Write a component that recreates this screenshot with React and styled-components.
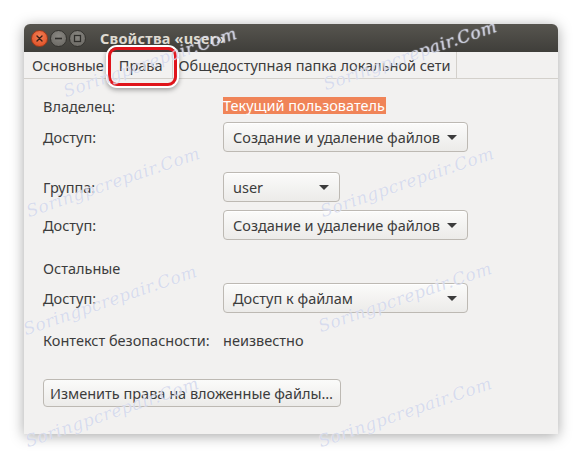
import React from "react"
import styled, { createGlobalStyle } from "styled-components"

const GlobalStyle = createGlobalStyle`
  html, body {
    margin: 0;
    padding: 0;
    background: #ffffff;
  }
  body {
    font-family: "Noto Sans", "Open Sans", sans-serif;
    font-size: 14.5px;
    color: #3c3c3c;
  }
`

const Page = styled.div`
  position: relative;
  width: 582px;
  height: 458px;
  padding: 24px 0 0 24px;
  box-sizing: border-box;
  overflow: hidden;
`

const Window = styled.div`
  width: 534px;
  height: 410px;
  background: #f2f1f0;
  border-radius: 6px 6px 0 0;
  box-shadow: 0 2px 14px rgba(0, 0, 0, 0.35);
  display: flex;
  flex-direction: column;
`

const TitleBar = styled.div`
  height: 28px;
  border-radius: 6px 6px 0 0;
  background: linear-gradient(#57554f, #3f3e3a);
  display: flex;
  align-items: center;
  padding-left: 7px;
  gap: 2px;
`

const WinButton = styled.span`
  width: 17px;
  height: 17px;
  box-sizing: border-box;
  border-radius: 50%;
  background: ${p => (p.$close
    ? "radial-gradient(circle at 50% 35%, #f57f55, #dc4a20)"
    : "radial-gradient(circle at 50% 35%, #8a8883, #66645f)")};
  border: 1px solid ${p => (p.$close ? "#9e3a1c" : "#34332f")};
  display: flex;
  align-items: center;
  justify-content: center;
`

const Title = styled.div`
  margin-left: 12px;
  color: #dfdbd2;
  font-weight: bold;
  font-size: 14.5px;
  letter-spacing: 0.2px;
`

const TabBar = styled.div`
  height: 26px;
  display: flex;
  align-items: stretch;
  padding-left: 2px;
  border-bottom: 1px solid #d3d0cb;
`

const Tab = styled.div`
  display: flex;
  align-items: center;
  padding: 0 6px;
  color: #3c3c3c;
  border-right: ${p => (p.$sep ? "1px solid #d3d0cb" : "none")};
`

const TabText = styled.span`
  position: relative;
  padding: 0 ${p => (p.$pad ? 3 : 0)}px;
`

const Highlight = styled.div`
  position: absolute;
  left: -8px;
  top: -8px;
  width: 63px;
  height: 33px;
  border: 3px solid #e0141b;
  border-radius: 9px;
  box-shadow: 0 0 0 2px #ffffff, 0 2px 5px 2px rgba(0, 0, 0, 0.35);
  pointer-events: none;
`

const Content = styled.div`
  padding: 18px 0 0 19px;
  display: flex;
  flex-direction: column;
`

const Row = styled.div`
  display: flex;
  align-items: center;
  height: ${p => p.$h || 17}px;
  margin-top: ${p => p.$mt || 0}px;
`

const Label = styled.div`
  width: 180px;
  flex-shrink: 0;
`

const OwnerValue = styled.span`
  background: #f08458;
  color: #ffffff;
  padding: 0 1px 0 0;
  line-height: 17px;
`

const Combo = styled.div`
  width: ${p => p.$w}px;
  height: 30px;
  box-sizing: border-box;
  border: 1px solid #bdb9b3;
  border-radius: 4px;
  background: linear-gradient(#fbfbfa, #ecebe9);
  box-shadow: inset 0 1px 0 #ffffff;
  display: flex;
  align-items: center;
  justify-content: space-between;
  padding: 0 10px 0 9px;
  color: #3c3c3c;
`

const Arrow = styled.span`
  width: 0;
  height: 0;
  border-left: 5px solid transparent;
  border-right: 5px solid transparent;
  border-top: 5px solid #3c3c3c;
`

const Button = styled.div`
  width: 298px;
  height: 28px;
  box-sizing: border-box;
  border: 1px solid #bdb9b3;
  border-radius: 4px;
  background: linear-gradient(#fbfbfa, #ecebe9);
  display: flex;
  align-items: center;
  padding-left: 6px;
  color: #3c3c3c;
`

const Watermark = styled.span`
  position: absolute;
  left: ${p => p.$x}px;
  top: ${p => p.$y}px;
  transform: translate(-50%, -50%) rotate(-19deg);
  font-family: "DejaVu Serif", serif;
  font-style: italic;
  font-size: 17px;
  letter-spacing: 0.5px;
  color: rgba(178, 186, 220, 0.5);
  text-shadow: 0 0 1px #ffffff;
  white-space: nowrap;
  pointer-events: none;
`

const marks = [
  [150, 62], [410, 55],
  [113, 182], [407, 182],
  [110, 300], [405, 297],
  [112, 412], [405, 412],
]

const CloseIcon = () => (
  <svg width="7" height="7" viewBox="0 0 7 7">
    <path d="M1 1L6 6M6 1L1 6" stroke="#3b2119" strokeWidth="1.4" strokeLinecap="round" />
  </svg>
)

const MinIcon = () => (
  <svg width="9" height="9" viewBox="0 0 9 9">
    <path d="M1 4.5H8" stroke="#2f2e2b" strokeWidth="1.6" />
  </svg>
)

const MaxIcon = () => (
  <svg width="9" height="9" viewBox="0 0 9 9">
    <rect x="1.5" y="1.5" width="6" height="6" fill="none" stroke="#2f2e2b" strokeWidth="1.3" />
  </svg>
)

const Dropdown = ({ w, children }) => (
  <Combo $w={w}>
    <span>{children}</span>
    <Arrow />
  </Combo>
)

const App = () => (
  <Page>
    <GlobalStyle />
    <Window>
      <TitleBar>
        <WinButton $close><CloseIcon /></WinButton>
        <WinButton><MinIcon /></WinButton>
        <WinButton><MaxIcon /></WinButton>
        <Title>Свойства «user»</Title>
      </TitleBar>
      <TabBar>
        <Tab>Основные</Tab>
        <Tab $sep>
          <TabText $pad>
            Права
            <Highlight />
          </TabText>
        </Tab>
        <Tab $sep>Общедоступная папка локальной сети</Tab>
      </TabBar>
      <Content>
        <Row $h={17}>
          <Label>Владелец:</Label>
          <OwnerValue>Текущий пользователь</OwnerValue>
        </Row>
        <Row $h={30} $mt={8}>
          <Label>Доступ:</Label>
          <Dropdown w={245}>Создание и удаление файлов</Dropdown>
        </Row>
        <Row $h={30} $mt={20}>
          <Label>Группа:</Label>
          <Dropdown w={117}>user</Dropdown>
        </Row>
        <Row $h={30} $mt={8}>
          <Label>Доступ:</Label>
          <Dropdown w={245}>Создание и удаление файлов</Dropdown>
        </Row>
        <Row $h={18} $mt={19}>
          <Label>Остальные</Label>
        </Row>
        <Row $h={30} $mt={6}>
          <Label>Доступ:</Label>
          <Dropdown w={245}>Доступ к файлам</Dropdown>
        </Row>
        <Row $h={18} $mt={18}>
          <Label>Контекст безопасности:</Label>
          <span>неизвестно</span>
        </Row>
        <Row $h={28} $mt={30}>
          <Button>Изменить права на вложенные файлы…</Button>
        </Row>
      </Content>
    </Window>
    {marks.map(([x, y], i) => (
      <Watermark key={i} $x={x} $y={y}>Soringpcrepair.Com</Watermark>
    ))}
  </Page>
)

export default App
